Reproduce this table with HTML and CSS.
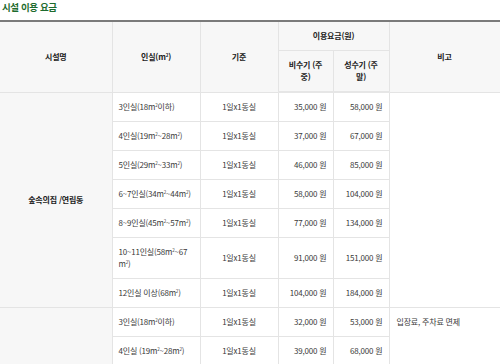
FILE: index.html
```html
<!DOCTYPE html>
<html lang="ko">
<head>
<meta charset="utf-8">
<link rel="stylesheet" href="styles.css">
</head>
<body>
<h3 class="title">시설 이용 요금</h3>
<table class="fee">
  <colgroup>
    <col class="c1"><col class="c2"><col class="c3"><col class="c4"><col class="c5"><col class="c6">
  </colgroup>
  <thead>
    <tr>
      <th rowspan="2">시설명</th>
      <th rowspan="2">인실(m<sup>2</sup>)</th>
      <th rowspan="2">기준</th>
      <th colspan="2">이용요금(원)</th>
      <th rowspan="2">비고</th>
    </tr>
    <tr>
      <th>비수기 (주중)</th>
      <th>성수기 (주말)</th>
    </tr>
  </thead>
  <tbody>
    <tr>
      <td rowspan="7" class="name">숲속의집 /연립동</td>
      <td>3인실(18m<sup>2</sup>이하)</td>
      <td class="ctr">1일x1동실</td>
      <td class="num">35,000 원</td>
      <td class="num">58,000 원</td>
      <td rowspan="7" class="note"></td>
    </tr>
    <tr><td>4인실(19m<sup>2</sup>~28m<sup>2</sup>)</td><td class="ctr">1일x1동실</td><td class="num">37,000 원</td><td class="num">67,000 원</td></tr>
    <tr><td>5인실(29m<sup>2</sup>~33m<sup>2</sup>)</td><td class="ctr">1일x1동실</td><td class="num">46,000 원</td><td class="num">85,000 원</td></tr>
    <tr><td>6~7인실(34m<sup>2</sup>~44m<sup>2</sup>)</td><td class="ctr">1일x1동실</td><td class="num">58,000 원</td><td class="num">104,000 원</td></tr>
    <tr><td>8~9인실(45m<sup>2</sup>~57m<sup>2</sup>)</td><td class="ctr">1일x1동실</td><td class="num">77,000 원</td><td class="num">134,000 원</td></tr>
    <tr><td>10~11인실(58m<sup>2</sup>~67 m<sup>2</sup>)</td><td class="ctr">1일x1동실</td><td class="num">91,000 원</td><td class="num">151,000 원</td></tr>
    <tr><td>12인실 이상(68m<sup>2</sup>)</td><td class="ctr">1일x1동실</td><td class="num">104,000 원</td><td class="num">184,000 원</td></tr>
    <tr>
      <td rowspan="7" class="name">숲속수련장</td>
      <td>3인실(18m<sup>2</sup>이하)</td>
      <td class="ctr">1일x1동실</td>
      <td class="num">32,000 원</td>
      <td class="num">53,000 원</td>
      <td rowspan="7" class="note top">입장료, 주차료 면제</td>
    </tr>
    <tr><td>4인실 (19m<sup>2</sup>~28m<sup>2</sup>)</td><td class="ctr">1일x1동실</td><td class="num">39,000 원</td><td class="num">68,000 원</td></tr>
    <tr><td>5인실 (29m<sup>2</sup>~33m<sup>2</sup>)</td><td class="ctr">1일x1동실</td><td class="num">49,000 원</td><td class="num">80,000 원</td></tr>
    <tr><td>6~7인실 (34m<sup>2</sup>~44m<sup>2</sup>)</td><td class="ctr">1일x1동실</td><td class="num">55,000 원</td><td class="num">98,000 원</td></tr>
    <tr><td>8~9인실 (45m<sup>2</sup>~57m<sup>2</sup>)</td><td class="ctr">1일x1동실</td><td class="num">73,000 원</td><td class="num">126,000 원</td></tr>
    <tr><td>10~11인실 (58m<sup>2</sup>~67m<sup>2</sup>)</td><td class="ctr">1일x1동실</td><td class="num">86,000 원</td><td class="num">143,000 원</td></tr>
    <tr><td>12인실 이상 (68m<sup>2</sup>)</td><td class="ctr">1일x1동실</td><td class="num">98,000 원</td><td class="num">175,000 원</td></tr>
  </tbody>
</table>
</body>
</html>
```

FILE: styles.css
```css
html, body {
  margin: 0;
  padding: 0;
  background: #fff;
}
body {
  font-family: "Noto Sans CJK KR", "Noto Sans", sans-serif;
  color: #333;
}
.title {
  margin: 0;
  padding: 1px 0 0 2px;
  height: 19px;
  font-size: 9.5px;
  line-height: 13px;
  font-weight: 700;
  letter-spacing: -0.4px;
  color: #1d6b2e;
}
.fee {
  width: 500px;
  table-layout: fixed;
  border-collapse: collapse;
  border-top: 2px solid #7b7b7b;
  font-size: 8px;
  line-height: 12px;
  letter-spacing: -0.2px;
}
.c1 { width: 112px; }
.c2 { width: 88px; }
.c3 { width: 78px; }
.c4 { width: 55px; }
.c5 { width: 56px; }
.c6 { width: 111px; }
.fee th, .fee td {
  border: 1px solid #e4e4e4;
  padding: 8px 6px;
  height: 12px;
  vertical-align: middle;
}
.fee th {
  background: #f7f7f7;
  color: #222;
  font-weight: 700;
  text-align: center;
}
.fee thead tr:last-child th {
  border-bottom: 2px solid #e6e6e6;
}
.fee td {
  color: #3a3a3a;
  text-align: left;
}
.fee td:first-child, .fee th:first-child { border-left: none; }
.fee sup {
  font-size: 4.5px;
  line-height: 0;
  vertical-align: 3px;
}
.name {
  background: #f7f7f7;
  font-weight: 700;
  color: #222 !important;
  text-align: center !important;
}
.ctr { text-align: center !important; }
.num { text-align: right !important; }
.note { padding-left: 7px !important; }
.note.top { vertical-align: top !important; }
```
